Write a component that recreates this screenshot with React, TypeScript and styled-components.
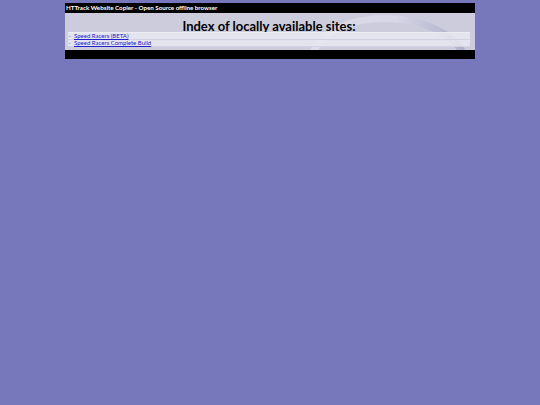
import styled, { createGlobalStyle } from 'styled-components';

const sites = [
    { name: 'Speed Racers (BETA)', href: '#beta' },
    { name: 'Speed Racers Complete Build', href: '#complete' },
];

function App() {
    return (
        <>
            <GlobalStyle />
            <Page>
                <SubTitle>HTTrack Website Copier - Open Source offline browser</SubTitle>
                <PageContent>
                    <Swoosh viewBox="0 0 410 37" preserveAspectRatio="none" aria-hidden="true">
                        <defs>
                            <linearGradient id="arc" x1="0" y1="0" x2="1" y2="0">
                                <stop offset="0" stopColor="#dcdcea" />
                                <stop offset="0.55" stopColor="#d6d6e6" />
                                <stop offset="0.75" stopColor="#c4c4d8" />
                                <stop offset="1" stopColor="#b0b0c8" />
                            </linearGradient>
                        </defs>
                        <path d="M248 40 C 266 -6, 372 -6, 398 40" stroke="url(#arc)" strokeWidth="7" fill="none" />
                    </Swoosh>
                    <Title>Index of locally available sites:</Title>
                    <SiteTable>
                        {sites.map((s) => (
                            <SiteRow key={s.href}>
                                <Bullet>·</Bullet>
                                <SiteLink href={s.href}>{s.name}</SiteLink>
                            </SiteRow>
                        ))}
                    </SiteTable>
                </PageContent>
                <BottomBar />
            </Page>
        </>
    )
}
export default App

const GlobalStyle = createGlobalStyle`
    body {
        margin: 0;
        padding-top: 3px;
        background: #7777bb;
        font-family: Lato, "DejaVu Sans", sans-serif;
    }
`

const Page = styled.div`
    width: 410px;
    margin: 0 auto;
`

const SubTitle = styled.div`
    background: #000;
    color: #fff;
    height: 10px;
    padding: 0 1px;
    font-size: 6.2px;
    font-weight: bold;
    line-height: 10px;
    white-space: nowrap;
`

const PageContent = styled.div`
    position: relative;
    background-color: #ccccdd;
    height: 37px;
    padding: 7px 5px 0 3px;
    box-sizing: border-box;
    overflow: hidden;
`

const Swoosh = styled.svg`
    position: absolute;
    inset: 0;
    width: 100%;
    height: 100%;
`

const Title = styled.h1`
    position: relative;
    margin: 0;
    text-align: center;
    font-size: 13px;
    font-weight: bold;
    line-height: 12px;
    color: #000;
`

const SiteTable = styled.div`
    position: relative;
    display: flex;
    flex-direction: column;
    background: rgba(232, 232, 242, 0.85);
    border-top: 1px solid #ececf4;
`

const SiteRow = styled.div`
    display: flex;
    align-items: center;
    height: 6px;
    border-bottom: 1px solid #d2d2e2;
    font-size: 6px;
    line-height: 6px;
    padding-left: 1px;
`

const Bullet = styled.span`
    color: #666;
    width: 5px;
`

const SiteLink = styled.a`
    color: #2222cc;
    text-decoration: underline;
    white-space: nowrap;
`

const BottomBar = styled.div`
    height: 9px;
    background: #000;
`
